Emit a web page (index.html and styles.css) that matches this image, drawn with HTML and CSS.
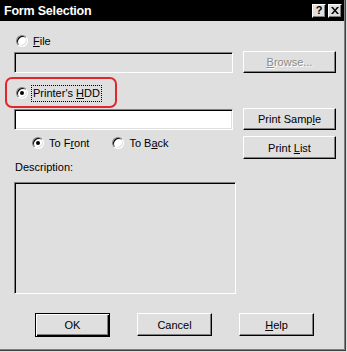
FILE: index.html
```html
<!DOCTYPE html>
<html>
<head>
<meta charset="utf-8">
<link rel="stylesheet" href="styles.css">
</head>
<body>
<div class="window">
  <div class="titlebar">
    <span class="title">Form Selection</span>
    <div class="tbtns">
      <span class="tbtn q">?</span>
      <span class="tbtn"><svg width="8" height="7" viewBox="0 0 8 7"><path d="M0 0h2l2 2.5L6 0h2L5 3.5 8 7H6L4 4.5 2 7H0l3-3.5z" fill="#000"/></svg></span>
    </div>
  </div>
  <div class="content">
    <div class="row r-file">
      <span class="radio"></span><span class="lbl"><u>F</u>ile</span>
    </div>
    <div class="row r-browse">
      <div class="field disabled"></div>
      <div class="btn disabled"><span><u>B</u>rowse...</span></div>
    </div>
    <div class="hdd-box">
      <span class="radio checked"></span><span class="lbl focus">Printer's <u>H</u>DD</span>
    </div>
    <div class="row r-sample">
      <div class="field white"></div>
      <div class="btn"><span>Print Samp<u>l</u>e</span></div>
    </div>
    <div class="row r-list">
      <div class="radios">
        <span class="radio checked"></span><span class="lbl">To F<u>r</u>ont</span>
        <span class="radio back"></span><span class="lbl">To B<u>a</u>ck</span>
      </div>
      <div class="btn tall"><span>Print <u>L</u>ist</span></div>
    </div>
    <div class="desc-label">Description:</div>
    <div class="desc-box"></div>
    <div class="actions">
      <div class="btn act default"><span>OK</span></div>
      <div class="btn act"><span>Cancel</span></div>
      <div class="btn act"><span><u>H</u>elp</span></div>
    </div>
  </div>
</div>
</body>
</html>
```
FILE: styles.css
```css
html, body {
  margin: 0;
  padding: 0;
  background: #dfdfdf;
}
body {
  font-family: "Liberation Sans", Arial, sans-serif;
  font-size: 11px;
  color: #000;
}
.window {
  width: 346px;
  height: 351px;
  box-sizing: border-box;
  background: #dfdfdf;
  border-right: 1px solid #404040;
  border-bottom: 1px solid #404040;
  box-shadow: inset -1px -1px #808080;
}
.titlebar {
  height: 21px;
  margin-right: 1px;
  background: #000;
  display: flex;
  align-items: center;
  justify-content: space-between;
  padding: 0 2px 0 4px;
}
.title {
  color: #fff;
  font-weight: bold;
  font-size: 12.5px;
  letter-spacing: -0.2px;
  margin-top: 1px;
}
.tbtns {
  display: flex;
  gap: 2px;
}
.tbtn {
  width: 14px;
  height: 14px;
  box-sizing: border-box;
  background: #dfdfdf;
  border: 1px solid;
  border-color: #fff #000 #000 #fff;
  box-shadow: inset -1px -1px #808080;
  display: flex;
  align-items: center;
  justify-content: center;
  font-weight: bold;
  font-size: 11px;
  line-height: 1;
}
.content {
  padding-left: 14px;
  display: flex;
  flex-direction: column;
}
.row {
  display: flex;
  align-items: flex-start;
  gap: 10px;
}
.radio {
  width: 12px;
  height: 12px;
  box-sizing: border-box;
  border-radius: 50%;
  border: 1px solid;
  border-color: #808080 #fff #fff #808080;
  box-shadow: inset 1px 1px #000, inset -1px -1px #dfdfdf;
  background: #fff;
  position: relative;
  flex: none;
}
.radio.checked::after {
  content: "";
  position: absolute;
  left: 3px;
  top: 3px;
  width: 4px;
  height: 4px;
  border-radius: 50%;
  background: #000;
}
.lbl {
  line-height: 13px;
}
.r-file {
  margin-top: 14px;
  margin-left: 2px;
  height: 12px;
  gap: 5px;
  align-items: center;
}
.r-browse {
  margin-top: 4px;
}
.field {
  width: 219px;
  height: 21px;
  margin-top: 1px;
  box-sizing: border-box;
  border: 1px solid;
  border-color: #808080 #fff #fff #808080;
  box-shadow: inset 1px 1px #000, inset -1px -1px #dfdfdf;
  background: #dfdfdf;
}
.field.white {
  background: #fff;
}
.btn {
  width: 93px;
  height: 22px;
  box-sizing: border-box;
  border: 1px solid;
  border-color: #fff #000 #000 #fff;
  box-shadow: inset -1px -1px #808080;
  display: flex;
  align-items: center;
  justify-content: center;
  background: #dfdfdf;
  white-space: pre;
}
.btn.tall {
  height: 23px;
}
.btn.disabled {
  color: #8a8a8a;
  text-shadow: 1px 1px #fff;
}
.hdd-box {
  margin-top: 4px;
  margin-left: -9px;
  width: 112px;
  height: 31px;
  box-sizing: border-box;
  border: 2px solid #e3262e;
  border-radius: 7px;
  display: flex;
  align-items: center;
  padding-left: 9px;
  gap: 4px;
}
.lbl.focus {
  outline: 1px dotted #000;
  padding: 1px 1px;
  margin-top: 1px;
}
.r-sample {
  margin-top: 0;
}
.r-list {
  margin-top: 6px;
}
.radios {
  width: 219px;
  margin-top: 1px;
  display: flex;
  align-items: center;
  padding-left: 18px;
  box-sizing: border-box;
  height: 12px;
}
.radios .lbl {
  margin-left: 5px;
}
.radios .radio.back {
  margin-left: 23px;
}
.desc-label {
  margin-top: 2px;
  margin-left: 1px;
  line-height: 12px;
}
.desc-box {
  margin-top: 9px;
  width: 222px;
  height: 112px;
  box-sizing: border-box;
  border: 1px solid;
  border-color: #808080 #fff #fff #808080;
  box-shadow: inset 1px 1px #000, inset -1px -1px #dfdfdf;
}
.actions {
  margin-top: 19px;
  padding-left: 21px;
  display: flex;
  gap: 27px;
}
.btn.act {
  width: 75px;
  height: 23px;
}
.btn.default {
  height: 24px;
  border: 1px solid #000;
  box-shadow: inset 1px 1px #fff, inset -1px -1px #000, inset -2px -2px #808080;
}
```
